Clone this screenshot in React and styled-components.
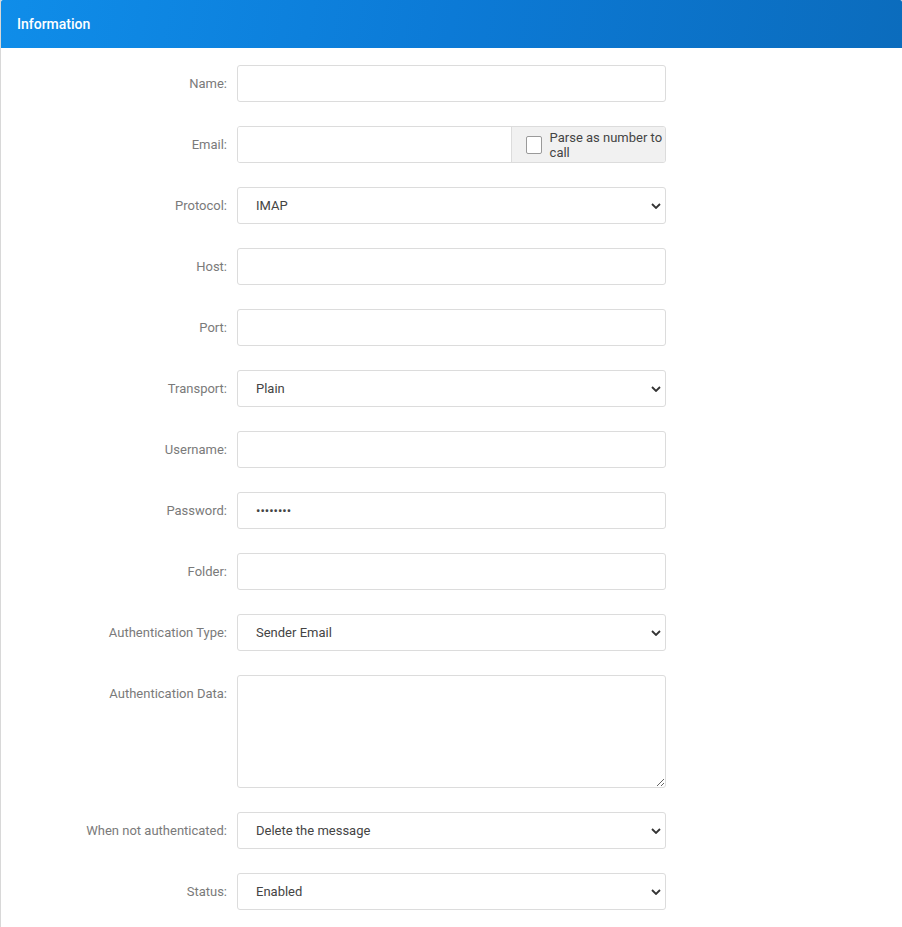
import React from 'react';
import styled, { createGlobalStyle } from 'styled-components';

const Global = createGlobalStyle`
  body { margin: 0; font-family: Roboto, "Liberation Sans", sans-serif; background: #fff; }
`;

const Panel = styled.div`
  border-left: 1px solid #d8d8d8;
  min-height: 927px;
  box-sizing: border-box;
`;

const Header = styled.div`
  height: 48px;
  background: linear-gradient(100deg, #0f8de9 0%, #0c7ad6 50%, #0b6cbd 100%);
  color: #fff;
  font-size: 14px;
  font-weight: 500;
  display: flex;
  align-items: center;
  padding-left: 16px;
  border-radius: 2px 2px 0 0;
`;

const Body = styled.div`
  padding-top: 17px;
  display: flex;
  flex-direction: column;
  gap: 24px;
`;

const Row = styled.div`
  display: grid;
  grid-template-columns: 226px 429px;
  column-gap: 10px;
  align-items: ${p => (p.$top ? 'start' : 'center')};
`;

const Label = styled.label`
  text-align: right;
  font-size: 13px;
  color: #7a7a7a;
  padding-top: ${p => (p.$top ? '11px' : '0')};
`;

const field = `
  box-sizing: border-box;
  width: 100%;
  height: 37px;
  border: 1px solid #dcdcdc;
  border-radius: 3px;
  font-family: Roboto, "Liberation Sans", sans-serif;
  font-size: 13px;
  color: #444;
  background: #fff;
  padding: 0 18px;
  outline: none;
`;

const Input = styled.input`${field}`;

const TextArea = styled.textarea`
  ${field}
  height: 113px;
  padding: 10px 18px;
  resize: vertical;
`;

const Select = styled.select`
  ${field}
  appearance: none;
  background: #fff url("data:image/svg+xml;utf8,<svg xmlns='http://www.w3.org/2000/svg' width='10' height='6'><path d='M1 1l4 4 4-4' fill='none' stroke='%23333' stroke-width='1.8'/></svg>") no-repeat right 4px center;
`;

const Group = styled.div`
  display: flex;
  height: 37px;
  border: 1px solid #dcdcdc;
  border-radius: 3px;
  box-sizing: border-box;
  overflow: hidden;
`;

const GroupInput = styled.input`
  flex: 0 0 237px;
  border: none;
  outline: none;
  padding: 0 18px;
`;

const Addon = styled.div`
  flex: 1;
  background: #f1f1f1;
  border-left: 1px solid #dcdcdc;
  display: flex;
  align-items: center;
  gap: 8px;
  padding-left: 14px;
  font-size: 13px;
  color: #444;
`;

const Box = styled.span`
  width: 16px;
  height: 16px;
  border: 1px solid #9a9a9a;
  border-radius: 2px;
  background: #fff;
`;

const Text = (label, el) => (
  <Row key={label}>
    <Label>{label}:</Label>
    {el}
  </Row>
);

const Sel = ({ v }) => (
  <Select defaultValue={v}>
    <option>{v}</option>
  </Select>
);

export default function App() {
  return (
    <Panel>
      <Global />
      <Header>Information</Header>
      <Body>
        {Text('Name', <Input />)}
        {Text('Email', (
          <Group>
            <GroupInput />
            <Addon><Box />Parse as number to call</Addon>
          </Group>
        ))}
        {Text('Protocol', <Sel v="IMAP" />)}
        {Text('Host', <Input />)}
        {Text('Port', <Input />)}
        {Text('Transport', <Sel v="Plain" />)}
        {Text('Username', <Input />)}
        {Text('Password', <Input type="password" defaultValue="password" />)}
        {Text('Folder', <Input />)}
        {Text('Authentication Type', <Sel v="Sender Email" />)}
        <Row $top>
          <Label $top>Authentication Data:</Label>
          <TextArea />
        </Row>
        {Text('When not authenticated', <Sel v="Delete the message" />)}
        {Text('Status', <Sel v="Enabled" />)}
      </Body>
    </Panel>
  );
}
